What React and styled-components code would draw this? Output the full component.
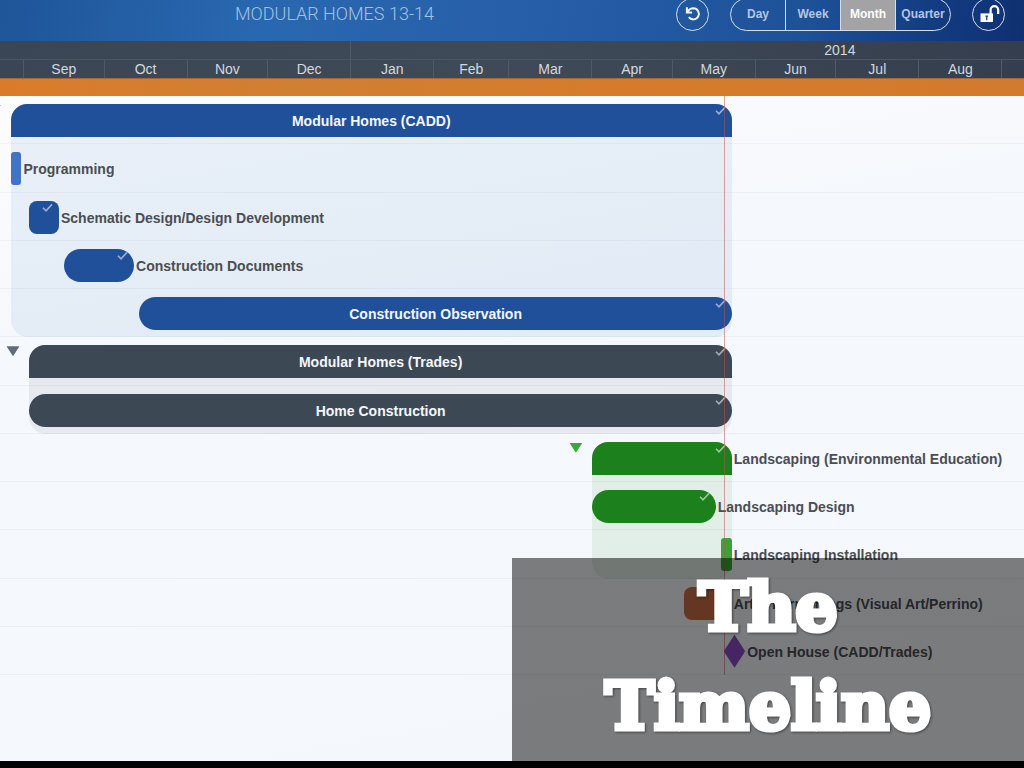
import React from 'react'
import styled, { createGlobalStyle, css } from 'styled-components'

const GlobalStyle = createGlobalStyle`
  *, *::before, *::after {
    box-sizing: border-box;
  }

  body {
    margin: 0;
    background: #000;
    font-family: 'Liberation Sans', Arial, sans-serif;
    overflow: hidden;
  }

  button {
    padding: 0;
    border: 0;
    background: none;
    color: inherit;
    font: inherit;
    cursor: pointer;
  }
`

// The visible window starts nine days before September 1st.
const VISIBLE_DAYS = 382
const TODAY = 270

const percent = days => `${(days / VISIBLE_DAYS) * 100}%`

const palette = {
  blue: { bar: '#21509b', shade: 'rgba(20, 100, 180, 0.08)', toggle: '#3f74c4' },
  lightBlue: { bar: '#4173c6' },
  slate: { bar: '#3d4855', shade: 'rgba(60, 65, 75, 0.08)', toggle: '#5f6b7a' },
  green: { bar: '#1c811c', shade: 'rgba(30, 150, 30, 0.09)', toggle: '#3ba63b' },
  lightGreen: { bar: '#38a438' },
  orange: { bar: '#cb6c43' },
  purple: { bar: '#8a4bc4' },
}

const months = [
  { name: '', days: 9 },
  { name: 'Sep', days: 30 },
  { name: 'Oct', days: 31 },
  { name: 'Nov', days: 30 },
  { name: 'Dec', days: 31 },
  { name: 'Jan', days: 31 },
  { name: 'Feb', days: 28 },
  { name: 'Mar', days: 31 },
  { name: 'Apr', days: 30 },
  { name: 'May', days: 31 },
  { name: 'Jun', days: 30 },
  { name: 'Jul', days: 31 },
  { name: 'Aug', days: 31 },
  { name: '', days: 30 },
]

const years = [
  { name: '', days: 131 },
  { name: '2014', days: 365 },
]

const groups = [
  {
    color: 'blue',
    start: 4,
    end: 273,
    tasks: [
      { name: 'Modular Homes (CADD)', start: 4, end: 273, shape: 'header', done: true, inside: true },
      { name: 'Programming', start: 4, end: 8, shape: 'sliver', color: 'lightBlue' },
      { name: 'Schematic Design/Design Development', start: 11, end: 22, shape: 'block', done: true },
      { name: 'Construction Documents', start: 24, end: 50, shape: 'pill', done: true },
      { name: 'Construction Observation', start: 52, end: 273, shape: 'pill', done: true, inside: true },
    ],
  },
  {
    color: 'slate',
    start: 11,
    end: 273,
    tasks: [
      { name: 'Modular Homes (Trades)', start: 11, end: 273, shape: 'header', done: true, inside: true },
      { name: 'Home Construction', start: 11, end: 273, shape: 'pill', done: true, inside: true },
    ],
  },
  {
    color: 'green',
    start: 221,
    end: 273,
    tasks: [
      { name: 'Landscaping (Environmental Education)', start: 221, end: 273, shape: 'header', done: true },
      { name: 'Landscaping Design', start: 221, end: 267, shape: 'pill', done: true },
      { name: 'Landscaping Installation', start: 269, end: 273, shape: 'sliver', color: 'lightGreen' },
    ],
  },
  {
    color: 'orange',
    tasks: [{ name: 'Art & Furnishings (Visual Art/Perrino)', start: 255, end: 273, shape: 'block' }],
  },
  {
    color: 'purple',
    tasks: [{ name: 'Open House (CADD/Trades)', start: 270, end: 278, shape: 'milestone' }],
  },
]

const Page = styled.div`
  display: flex;
  flex-direction: column;
  min-height: 100vh;
  border-bottom: 7px solid #000;
  background: linear-gradient(170deg, #fdfdfe 0%, #f5f8fc 40%, #f4f7fb 100%);
  position: relative;
  overflow: hidden;
`

const Toolbar = styled.header`
  display: flex;
  align-items: center;
  gap: 21px;
  height: 41px;
  padding: 0 19px 13px 14px;
  background: linear-gradient(100deg, #1f5599 0%, #2968b0 26%, #275ea8 52%, #1d5299 78%, #123a80 92%, #0f3070 100%);
`

const Title = styled.h1`
  flex: 1;
  margin: 0;
  color: #a3c2e4;
  font-family: Roboto, 'Liberation Sans', sans-serif;
  font-size: 18px;
  font-weight: 300;
  line-height: 20px;
  text-align: center;
`

const RoundButton = styled.button`
  display: grid;
  flex: none;
  place-content: center;
  width: 33px;
  height: 33px;
  border: 1px solid #d3dff0;
  border-radius: 50%;
`

const Segments = styled.div`
  display: flex;
  flex: none;
  height: 33px;
  border: 1px solid #d3dff0;
  border-radius: 17px;
  overflow: hidden;
`

const Segment = styled.button`
  width: 54px;
  color: #b3c6e2;
  font-size: 12px;
  font-weight: 700;
  text-align: center;

  & + & {
    width: 55px;
    border-left: 1px solid #d3dff0;
  }

  &[aria-pressed='true'] {
    background: #a3a3a5;
    color: #fff;
  }
`

const Calendar = styled.div`
  background: linear-gradient(90deg, #3a4655, #3f4a58 50%, #343e4e);
  color: #d3d8de;
  font-size: 14px;
`

const CalendarRow = styled.div`
  display: flex;
  height: ${({ $height }) => $height}px;
  overflow: hidden;

  & + & {
    border-top: 1px solid #4b5665;
  }
`

const CalendarCell = styled.div`
  flex: none;
  border-right: 1px solid #4f5a69;
  line-height: 19px;
  text-align: center;
`

const Phase = styled.div`
  height: 18px;
  border-top: 1px solid #a5672f;
  background: linear-gradient(90deg, #da7b2b, #d07f33 30%, #d67b2b 60%, #d27a2e);
`

const Chart = styled.main`
  display: flex;
  flex-direction: column;
  min-height: 579px;
  position: relative;
`

const Group = styled.section`
  display: grid;
  flex: ${({ $rows }) => $rows};
`

const Shade = styled.div`
  grid-area: 1 / 1;
  margin-top: 8px;
  border-radius: 17px;
  background: ${({ $color }) => palette[$color].shade};
`

const Rows = styled.div`
  display: flex;
  flex-direction: column;
  grid-area: 1 / 1;
`

const Row = styled.div`
  display: flex;
  flex: 1;
  align-items: flex-start;
  padding-top: 8px;
  border-bottom: 1px solid rgba(60, 80, 110, 0.05);
`

const shapes = {
  header: css`
    border-radius: 16px 16px 0 0;
  `,
  pill: css`
    border-radius: 17px;
  `,
  block: css`
    border-radius: 8px;
  `,
  sliver: css`
    border-radius: 3px;
  `,
  milestone: css`
    clip-path: polygon(50% 0, 100% 50%, 50% 100%, 0 50%);
  `,
}

const Bar = styled.div`
  display: flex;
  flex: none;
  justify-content: center;
  height: 33px;
  background: ${({ $color }) => palette[$color].bar};
  position: relative;
  ${({ $shape }) => shapes[$shape]}
`

const Label = styled.span`
  color: ${({ $inside }) => ($inside ? '#f4f7fb' : '#4b4d52')};
  font-size: 14px;
  font-weight: 700;
  line-height: 35px;
  white-space: nowrap;
`

const OutsideLabel = styled(Label)`
  height: 33px;
  margin-left: 2px;
`

const Check = styled.svg`
  width: 11px;
  height: 9px;
  position: absolute;
  top: 2px;
  right: 6px;
`

const Toggle = styled.button`
  width: 13px;
  height: 10px;
  margin-right: 10px;
  background: ${({ $color }) => palette[$color].toggle};
  clip-path: polygon(0 0, 100% 0, 50% 100%);
  position: absolute;
  top: 1px;
  right: 100%;
`

const TodayLine = styled.div`
  width: 1px;
  background: rgba(190, 75, 80, 0.5);
  position: absolute;
  top: 0;
  bottom: 0;
`

const Caption = styled.div`
  width: 50%;
  height: 203px;
  background: rgba(0, 0, 0, 0.5);
  color: #fff;
  position: absolute;
  right: 0;
  bottom: 0;
`

const CaptionText = styled.h2`
  margin: 0;
  font-family: 'DejaVu Serif', serif;
  font-size: 66px;
  font-weight: 700;
  line-height: 99px;
  text-align: center;
  filter: drop-shadow(1px 1px 1px rgba(0, 0, 0, 0.45));
  -webkit-text-stroke: 5px #fff;
`

const UndoIcon = () => (
  <svg width="18" height="18" viewBox="0 0 18 18" fill="none" stroke="#eef4fc" strokeWidth="2" aria-hidden="true">
    <path d="M3.2 7.2C4.6 4.6 6.8 3.2 9.4 3.2a5.6 5.6 0 1 1-4.6 9" />
    <path d="M2.9 2.2v5.4h5.2" />
  </svg>
)

const UnlockIcon = () => (
  <svg width="22" height="20" viewBox="0 0 22 20" fill="none" aria-hidden="true">
    <path d="M12.6 10V6a3.8 3.8 0 0 1 7.6 0v4" stroke="#fff" strokeWidth="2.2" />
    <path fill="#fff" d="M2.5 9.4H15V18H2.5z" />
    <path fill="#1b4486" d="M7.6 11.4h2.3v1.5h-.5v3.3H8.1v-3.3h-.5z" />
  </svg>
)

const CheckIcon = () => (
  <Check viewBox="0 0 11 9" fill="none" aria-hidden="true">
    <path d="M1 4.8 4 7.8 10 1.4" stroke="#fff" strokeOpacity="0.55" strokeWidth="1.6" />
  </Check>
)

const Task = ({ task, groupColor }) => {
  const { name, start, end, shape, done, inside } = task
  const color = task.color || groupColor

  return (
    <Row>
      <Bar $color={color} $shape={shape} style={{ marginLeft: percent(start), width: percent(end - start) }}>
        {shape === 'header' && <Toggle type="button" $color={color} aria-label={`Collapse ${name}`} />}
        {inside && <Label $inside>{name}</Label>}
        {done && <CheckIcon />}
      </Bar>
      {!inside && <OutsideLabel>{name}</OutsideLabel>}
    </Row>
  )
}

const App = () => {
  const [scale, setScale] = React.useState('Month')

  return (
    <Page>
      <GlobalStyle />
      <Toolbar>
        <Title>MODULAR HOMES 13-14</Title>
        <RoundButton type="button" aria-label="Undo">
          <UndoIcon />
        </RoundButton>
        <Segments role="group" aria-label="Scale">
          {['Day', 'Week', 'Month', 'Quarter'].map(name => (
            <Segment key={name} type="button" aria-pressed={scale === name} onClick={() => setScale(name)}>
              {name}
            </Segment>
          ))}
        </Segments>
        <RoundButton type="button" aria-label="Unlock">
          <UnlockIcon />
        </RoundButton>
      </Toolbar>
      <Calendar>
        {[years, months].map((cells, row) => (
          <CalendarRow key={row} $height={row ? 19 : 18}>
            {cells.map(({ name, days }, i) => (
              <CalendarCell key={i} style={{ width: percent(days) }}>
                {name}
              </CalendarCell>
            ))}
          </CalendarRow>
        ))}
      </Calendar>
      <Phase />
      <Chart>
        {groups.map(({ color, start, end, tasks }) => (
          <Group key={color} $rows={tasks.length}>
            {end && <Shade $color={color} style={{ marginLeft: percent(start), width: percent(end - start) }} />}
            <Rows>
              {tasks.map(task => (
                <Task key={task.name} task={task} groupColor={color} />
              ))}
            </Rows>
          </Group>
        ))}
        <TodayLine style={{ left: percent(TODAY) }} />
      </Chart>
      <Caption>
        <CaptionText>
          The
          <br />
          Timeline
        </CaptionText>
      </Caption>
    </Page>
  )
}

export default App
